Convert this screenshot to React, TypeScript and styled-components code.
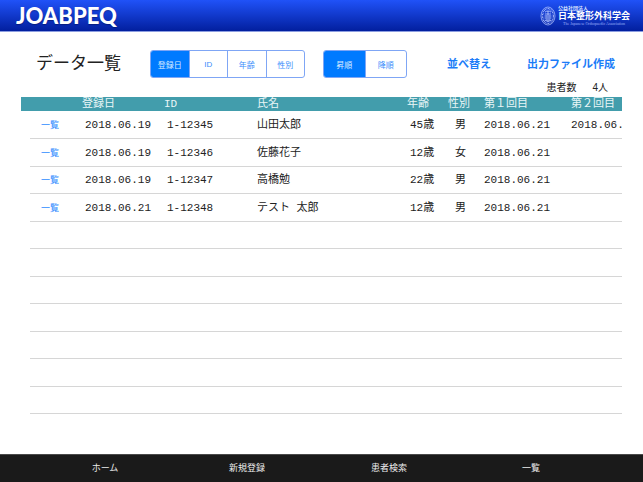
import React, { useState } from "react";
import styled, { createGlobalStyle } from "styled-components";

const SANS = '"Liberation Sans", "Noto Sans CJK JP", sans-serif';
const MONO = '"Liberation Mono", "Noto Sans CJK JP", monospace';

const GlobalStyle = createGlobalStyle`
  *, *::before, *::after { box-sizing: border-box; }
  body { margin: 0; background: #fff; font-family: ${SANS}; color: #222; }
  button { font: inherit; border: 0; padding: 0; background: none; cursor: pointer; }
`;

const Page = styled.div`
  display: flex;
  flex-direction: column;
  min-height: 100vh;
`;

const Header = styled.header`
  display: flex;
  align-items: center;
  justify-content: space-between;
  height: 32px;
  padding: 0 13px 0 16px;
  color: #fff;
  background: linear-gradient(#2052f8, #021f9e);
  border-bottom: 1px solid #8c9de0;
`;

const Brand = styled.h1`
  margin: 0;
  font: 900 22px/32px Lato, sans-serif;
  text-shadow: 0 1px 1px rgba(0, 0, 40, 0.35);
`;

const Society = styled.div`
  display: flex;
  align-items: center;
  gap: 2px;
  color: #dfe6ff;
`;

const SocietyText = styled.div`
  display: flex;
  flex-direction: column;
  white-space: nowrap;
`;

const SocietyKind = styled.span`
  font-size: 5px;
  font-weight: 700;
  line-height: 5px;
`;

const SocietyName = styled.span`
  font-size: 9px;
  font-weight: 700;
  line-height: 11px;
  color: #fff;
`;

const SocietyEnglish = styled.span`
  font: 4px/4px "Liberation Serif", serif;
  text-align: center;
  color: #9db2fa;
`;

const Main = styled.main`
  flex: 1;
  padding: 18px 21px 0;
`;

const Toolbar = styled.div`
  display: flex;
  align-items: center;
  height: 28px;
  padding: 0 7px 0 15px;
  white-space: nowrap;
`;

const Title = styled.h2`
  width: 90px;
  margin: 0 24px 0 0;
  font-size: 17px;
  font-weight: 400;
  line-height: 28px;
`;

const Segments = styled.div<{ $width: number }>`
  display: flex;
  width: ${(p) => p.$width}px;
  height: 28px;
  overflow: hidden;
  border: 1px solid #7fa6f5;
  border-radius: 3px;

  & + & {
    margin-left: 18px;
  }
`;

const Segment = styled.button`
  flex: 1;
  font-size: 8px;
  color: #3b8dfb;

  & + & {
    border-left: 1px solid #7fa6f5;
  }

  &[aria-pressed="true"] {
    color: #d9eaff;
    background: #007aff;
  }
`;

const Actions = styled.div`
  display: flex;
  flex: 1;
  justify-content: space-between;
  padding-left: 40px;
`;

const Action = styled.button`
  font-size: 11px;
  font-weight: 700;
  line-height: 28px;
  color: #1b7cf8;
`;

const Count = styled.p`
  display: flex;
  justify-content: flex-end;
  gap: 16px;
  margin: 0;
  padding-right: 14px;
  font-size: 10px;
  line-height: 19px;
`;

const TableFrame = styled.div`
  overflow: hidden;
`;

const Table = styled.table`
  width: 100%;
  table-layout: fixed;
  border-collapse: separate;
  border-spacing: 0;
  font-family: ${MONO};
  font-size: 11px;
  text-align: left;
  white-space: nowrap;
`;

const Col = styled.col<{ $width?: number }>`
  width: ${(p) => (p.$width ? `${p.$width}px` : "auto")};
`;

const HeadCell = styled.th`
  height: 14px;
  padding: 0;
  font-weight: 400;
  line-height: 14px;
  color: #eaf6f7;
  background: #429dac;
`;

const Row = styled.tr`
  height: 28px;

  &:nth-child(odd):not(:first-child) {
    height: 27px;
  }
`;

const Cell = styled.td<{ $inset?: number }>`
  padding: 0 0 0 ${(p) => p.$inset ?? 0}px;
  line-height: 20px;
  border-bottom: 1px solid #d6d6d6;
`;

const Gutter = styled.td`
  padding: 0;
`;

const RowLink = styled.a`
  font-family: ${SANS};
  font-size: 9px;
  color: #2f8bff;
  text-decoration: none;
`;

const Footer = styled.nav`
  display: flex;
  height: 28px;
  padding: 0 41px 0 34px;
  background: #1a1a1a;
  border-top: 1px solid #4a4a4a;
`;

const FooterLink = styled.a`
  flex: 1;
  font-size: 9px;
  line-height: 27px;
  text-align: center;
  color: #ececec;
  text-decoration: none;
`;

function Emblem() {
  return (
    <svg width="16" height="20" viewBox="0 0 16 20" fill="none" stroke="#b9c8ff" aria-hidden="true">
      <ellipse cx="8" cy="10" rx="7" ry="9" strokeWidth="0.7" />
      <ellipse cx="8" cy="10" rx="5.4" ry="7.4" strokeWidth="1.3" strokeDasharray="0.8 0.7" />
      <path d="M5 6.2c1-1.6 5-1.6 6 0M4.8 8h6.4M8 5v11" strokeWidth="0.9" />
      <path d="M5.2 9v4.5M6.7 9v6M9.3 9v6M10.8 9v4.5" strokeWidth="0.7" />
      <path d="M5 14.2c1.5 1.4 4.5 1.4 6 0" strokeWidth="0.8" />
    </svg>
  );
}

type Patient = {
  date: string;
  id: string;
  name: string;
  age: number;
  sex: string;
  visits: string[];
};

const PATIENTS: Patient[] = [
  { date: "2018.06.19", id: "1-12345", name: "山田太郎", age: 45, sex: "男", visits: ["2018.06.21", "2018.06.21"] },
  { date: "2018.06.19", id: "1-12346", name: "佐藤花子", age: 12, sex: "女", visits: ["2018.06.21"] },
  { date: "2018.06.19", id: "1-12347", name: "高橋勉", age: 22, sex: "男", visits: ["2018.06.21"] },
  { date: "2018.06.21", id: "1-12348", name: "テスト 太郎", age: 12, sex: "男", visits: ["2018.06.21"] },
];

const SORT_KEYS: { key: "date" | "id" | "age" | "sex"; label: string }[] = [
  { key: "date", label: "登録日" },
  { key: "id", label: "ID" },
  { key: "age", label: "年齢" },
  { key: "sex", label: "性別" },
];

const COLUMNS: { label: string; width?: number }[] = [
  { label: "", width: 9 },
  { label: "", width: 52 },
  { label: "登録日", width: 82 },
  { label: "ID", width: 93 },
  { label: "氏名" },
  { label: "年齢", width: 41 },
  { label: "性別", width: 36 },
  { label: "第１回目", width: 87 },
  { label: "第２回目", width: 51 },
];

const ROW_COUNT = 11;
const MENU = ["ホーム", "新規登録", "患者検索", "一覧"];

export default function App() {
  const [sortKey, setSortKey] = useState(SORT_KEYS[0].key);
  const [descending, setDescending] = useState(false);
  const [rows, setRows] = useState(PATIENTS);

  const sortRows = () => {
    const direction = descending ? -1 : 1;
    setRows(
      [...PATIENTS].sort((a, b) =>
        a[sortKey] === b[sortKey] ? 0 : a[sortKey] > b[sortKey] ? direction : -direction
      )
    );
  };

  return (
    <Page lang="ja">
      <GlobalStyle />
      <Header>
        <Brand>JOABPEQ</Brand>
        <Society>
          <Emblem />
          <SocietyText>
            <SocietyKind>公益社団法人</SocietyKind>
            <SocietyName>日本整形外科学会</SocietyName>
            <SocietyEnglish>The Japanese Orthopaedic Association</SocietyEnglish>
          </SocietyText>
        </Society>
      </Header>
      <Main>
        <Toolbar>
          <Title>データ一覧</Title>
          <Segments $width={155} role="group" aria-label="並べ替え項目">
            {SORT_KEYS.map(({ key, label }) => (
              <Segment key={key} type="button" aria-pressed={key === sortKey} onClick={() => setSortKey(key)}>
                {label}
              </Segment>
            ))}
          </Segments>
          <Segments $width={84} role="group" aria-label="並び順">
            <Segment type="button" aria-pressed={!descending} onClick={() => setDescending(false)}>
              昇順
            </Segment>
            <Segment type="button" aria-pressed={descending} onClick={() => setDescending(true)}>
              降順
            </Segment>
          </Segments>
          <Actions>
            <Action type="button" onClick={sortRows}>並べ替え</Action>
            <Action type="button">出力ファイル作成</Action>
          </Actions>
        </Toolbar>
        <Count>
          <span>患者数</span>
          <span>{rows.length}人</span>
        </Count>
        <TableFrame>
          <Table>
            <colgroup>
              {COLUMNS.map((column, i) => (
                <Col key={i} $width={column.width} />
              ))}
            </colgroup>
            <thead>
              <tr>
                {COLUMNS.map((column, i) => (
                  <HeadCell key={i} scope="col">{column.label}</HeadCell>
                ))}
              </tr>
            </thead>
            <tbody>
              {Array.from({ length: ROW_COUNT }, (_, i) => {
                const patient = rows[i];
                return (
                  <Row key={i}>
                    <Gutter />
                    {patient ? (
                      <>
                        <Cell $inset={11}>
                          <RowLink href={`#${patient.id}`}>一覧</RowLink>
                        </Cell>
                        <Cell $inset={3}>{patient.date}</Cell>
                        <Cell $inset={3}>{patient.id}</Cell>
                        <Cell>{patient.name}</Cell>
                        <Cell $inset={3}>{patient.age}歳</Cell>
                        <Cell $inset={7}>{patient.sex}</Cell>
                        <Cell>{patient.visits[0]}</Cell>
                        <Cell>{patient.visits[1]}</Cell>
                      </>
                    ) : (
                      <Cell colSpan={COLUMNS.length - 1} />
                    )}
                  </Row>
                );
              })}
            </tbody>
          </Table>
        </TableFrame>
      </Main>
      <Footer aria-label="メニュー">
        {MENU.map((label) => (
          <FooterLink key={label} href="#">{label}</FooterLink>
        ))}
      </Footer>
    </Page>
  );
}
